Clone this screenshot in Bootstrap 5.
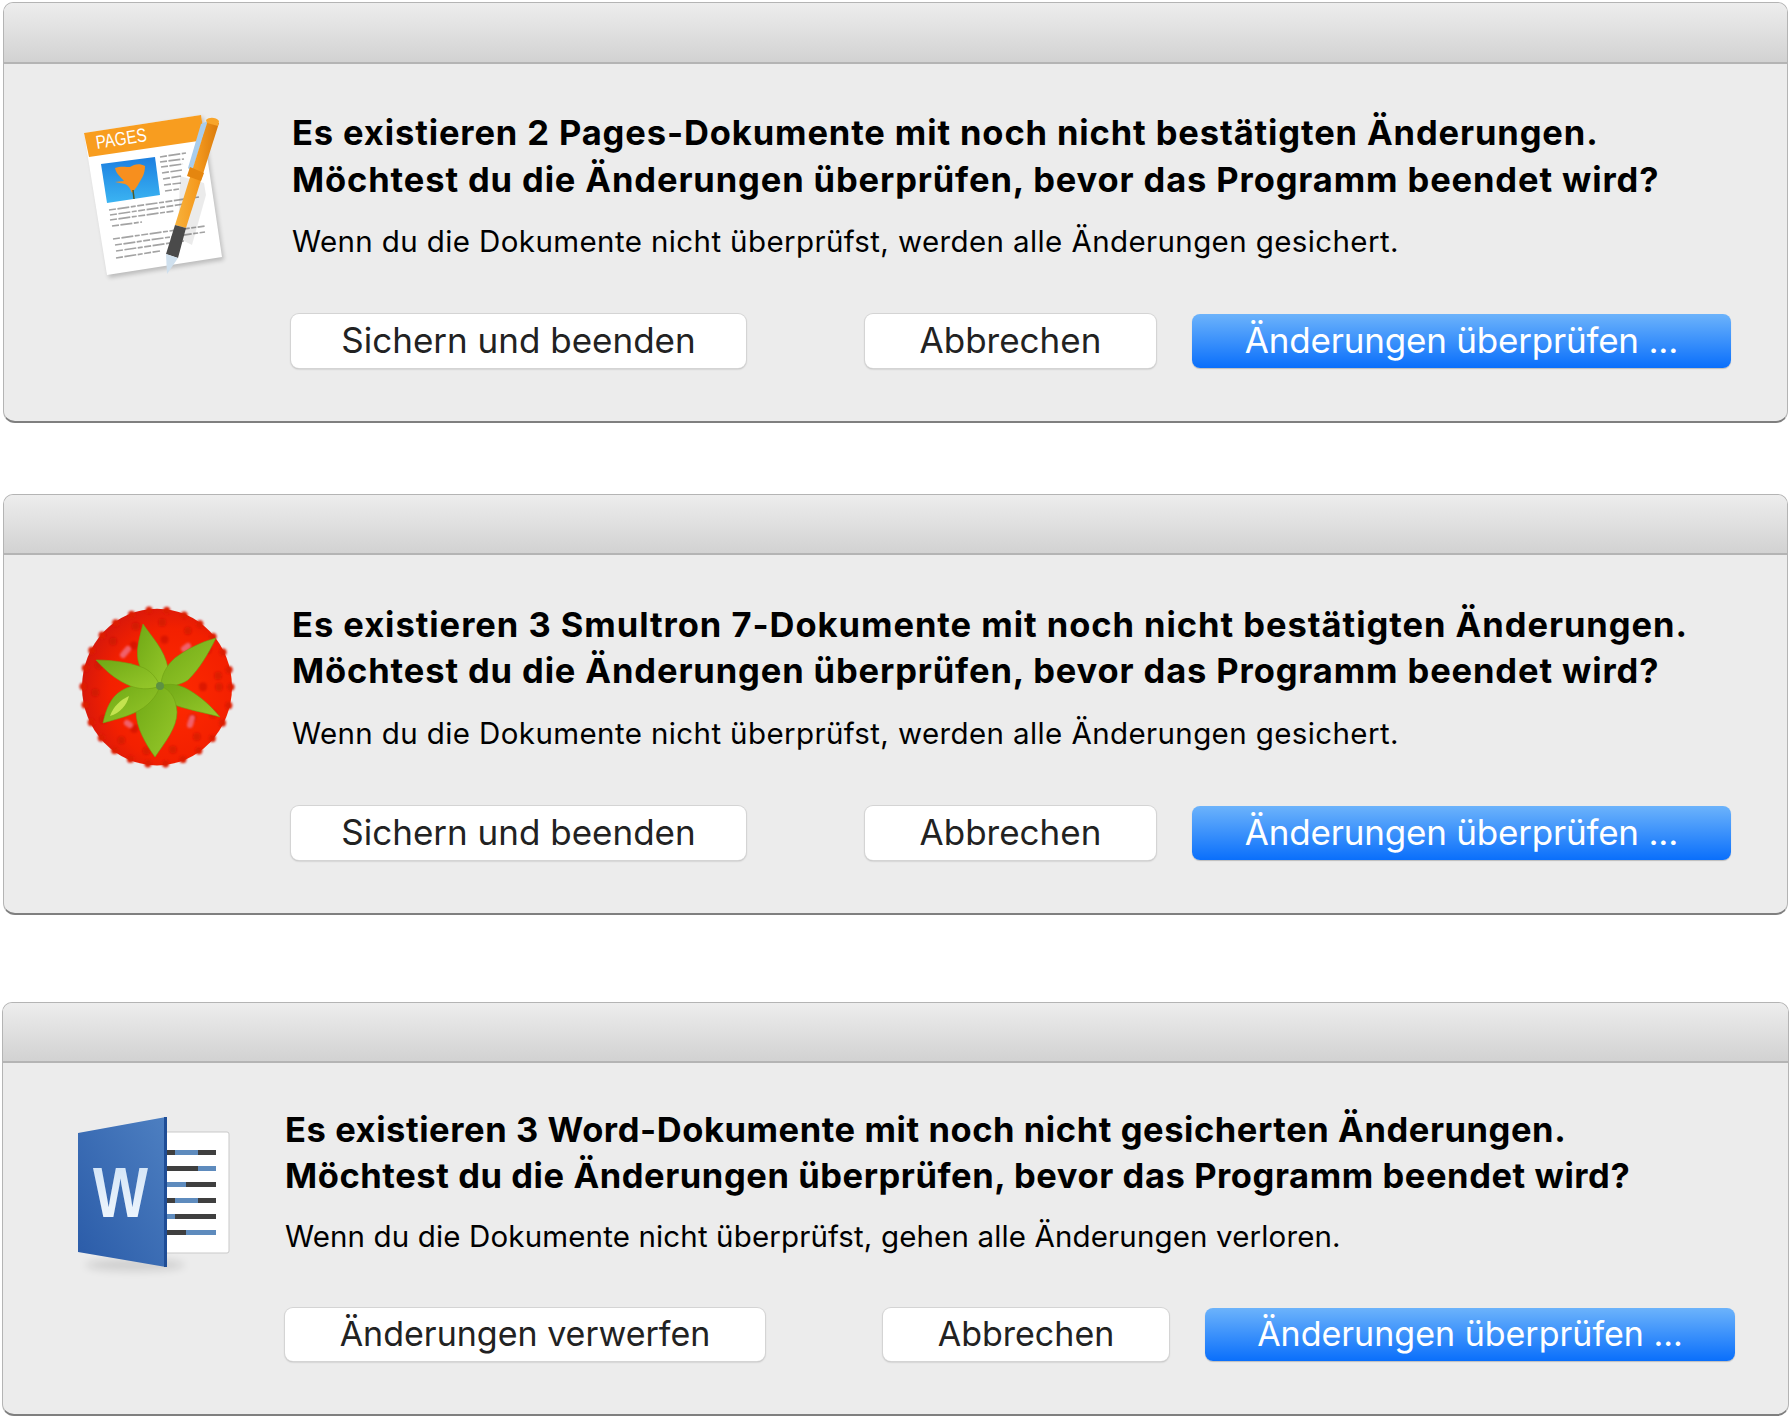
<!DOCTYPE html>
<html lang="de">
<head>
    <meta charset="UTF-8">
    <title>Änderungen überprüfen</title>
    <link href="https://cdn.jsdelivr.net/npm/bootstrap@5.3.0/dist/css/bootstrap.min.css" rel="stylesheet">
    <style>
        body { background: #fff; font-family: Inter, "Liberation Sans", sans-serif; color: #000; }
        .mac-stack { width: 1791px; height: 1418px; overflow: hidden; padding: 2px 3px 0; }
        .mac-win { background: #ececec; border: 1px solid #b4b4b4; border-bottom: 2px solid #7f7f7f; border-radius: 10px 10px 12px 12px; overflow: hidden; }
        .win-a { height: 421px; margin-bottom: 71px; }
        .win-b { height: 421px; margin-bottom: 87px; }
        .win-c { height: 414px; margin-left: -1px; margin-right: -1px; }
        .mac-title { height: 60px; background: linear-gradient(#ededed, #d2d2d2); border-bottom: 2px solid #b4b4b4; }
        .win-a .mac-title { height: 61px; }
        .mac-icon { width: 288px; flex: none; }
        .mac-icon svg { display: block; }
        .mac-main { padding-top: 47px; }
        .win-a .mac-main { padding-top: 46px; }
        .win-b .mac-main { padding-top: 46.5px; }
        .win-c .mac-main { padding-top: 43.5px; }
        .win-c .mac-icon { width: 282px; }
        .mac-head { font-size: 34.5px; line-height: 46.5px; font-weight: 700; letter-spacing: .88px; margin: 0; white-space: nowrap; }
        .win-c .mac-head { letter-spacing: .57px; }
        .head-wide { letter-spacing: .96px; }
        .mac-sub { font-size: 29.5px; line-height: 40px; letter-spacing: .39px; margin: 18px 0 0; white-space: nowrap; }
        .win-c .mac-sub { letter-spacing: .14px; margin-top: 16.5px; }
        .mac-btns { margin-top: 53px; margin-left: -1px; }
        .win-c .mac-btns { margin-top: 51.5px; margin-left: 0; }
        .mac-btn { height: 54px; font-size: 35px; line-height: 50px; padding: 0 0 2px; border: 0; border-radius: 8px; background: #fff; color: #222; box-shadow: 0 0 0 1px #d4d4d4, 0 1px 2px rgba(0,0,0,.3); white-space: nowrap; }
        .win-c .mac-btn { font-size: 34px; height: 53px; padding-bottom: 0; }
        .mac-btn:hover, .mac-btn:active { background: #fff; color: #222; }
        .mac-blue, .mac-blue:hover, .mac-blue:active { background: linear-gradient(#6cb3fb, #0a6ffb); color: #fff; box-shadow: 0 1px 1px rgba(0,0,0,.2); letter-spacing: -.2px; }
        .win-c .mac-blue { letter-spacing: 0; }
        .w-save { width: 455px; margin-right: 119px; }
        .w-cancel { width: 291px; margin-right: 36px; }
        .w-check { width: 539px; }
        .w-discard { width: 480px; margin-right: 118px; }
        .w-cancel-c { width: 286px; margin-right: 36px; }
        .w-check-c { width: 530px; }
    </style>
</head>
<body>
<div class="mac-stack">

    <!-- Pages -->
    <div class="mac-win win-a">
        <div class="mac-title"></div>
        <div class="d-flex">
            <div class="mac-icon">
                <svg width="288" height="240" viewBox="4 64 288 240">
                    <defs>
                        <linearGradient id="penG" x1="0" y1="0" x2="1" y2="0">
                            <stop offset="0" stop-color="#f7b23c"/><stop offset=".5" stop-color="#f59a1e"/><stop offset="1" stop-color="#d97a0c"/>
                        </linearGradient>
                        <linearGradient id="photoG" x1="0" y1="0" x2="0" y2="1">
                            <stop offset="0" stop-color="#1c7fe0"/><stop offset="1" stop-color="#3bb4f2"/>
                        </linearGradient>
                        <filter id="soft" x="-5%" y="-5%" width="110%" height="110%"><feGaussianBlur stdDeviation=".4"/></filter>
                        <filter id="softer" x="-10%" y="-10%" width="120%" height="120%"><feGaussianBlur stdDeviation="2"/></filter>
                    </defs>
                    <polygon points="87,136 203,117 224,260 109,278" fill="#000" opacity=".2" filter="url(#softer)"/>
                    <polygon points="84,133 201,115 222,257 107,275" fill="#fff"/>
                    <polygon points="84,133 201,115 205,140 89,157" fill="#f89d1f"/>
                    <text x="0" y="0" transform="translate(97,149) rotate(-9)" font-family="Liberation Sans" font-size="19" fill="#fff" textLength="51" lengthAdjust="spacingAndGlyphs">PAGES</text>
                    <polygon points="101,164 155,157 160,195 107,203" fill="url(#photoG)"/>
                    <path d="M132 193c-2-5-3-7-7-9l-10-2 9-1c-3-4-8-7-9-13 5-2 11-1 15-1 4-3 10-4 15-1 0 8-3 12-6 17-2 4-4 6-7 10z" fill="#f78f1e"/>
                    <path d="M133 190l1 9" stroke="#4a5a2a" stroke-width="1.5"/>
                    <g stroke="#8d8d8d" stroke-width="1.7" stroke-dasharray="7 1.5 12 1.5 5 1.5" opacity=".8" filter="url(#soft)">
                        <path d="M160 157l26-4M160 162l24-3M161 167l22-3M162 173l20-3M163 179l18-3M164 185l17-2M165 191l14-2"/>
                        <path d="M109 210l90-13M110 215l74-11M110 220l64-9M112 226l30-4"/>
                        <path d="M113 239l92-13M115 245l90-13M116 251l68-10M116 258l44-7"/>
                    </g>
                    <polygon points="180,176 204,183 206,195 192,245 178,238" fill="#000" opacity=".08"/>
                    <polygon points="201,124 208,121 192,172 188,168" fill="#a9cdec"/>
                    <polygon points="208,120 219,123 186,228 175,225" fill="url(#penG)"/>
                    <path d="M206 120c3-3 10-3 13 1l-1 5-11-3z" fill="#f8a52a"/>
                    <polygon points="190,167 204,173 201,181 187,176" fill="#e5860f"/>
                    <polygon points="175,225 186,228 178,258 166,254" fill="#4a4a4a"/>
                    <polygon points="166,254 178,258 167,274" fill="#cfe0ee"/>
                </svg>
            </div>
            <div class="mac-main">
                <h1 class="mac-head">Es existieren 2 Pages-Dokumente mit noch nicht bestätigten Änderungen.<br>Möchtest du die Änderungen überprüfen, bevor das Programm beendet wird?</h1>
                <p class="mac-sub">Wenn du die Dokumente nicht überprüfst, werden alle Änderungen gesichert.</p>
                <div class="d-flex mac-btns">
                    <button class="btn mac-btn w-save">Sichern und beenden</button>
                    <button class="btn mac-btn w-cancel">Abbrechen</button>
                    <button class="btn mac-btn mac-blue w-check">Änderungen überprüfen ...</button>
                </div>
            </div>
        </div>
    </div>

    <!-- Smultron -->
    <div class="mac-win win-b">
        <div class="mac-title"></div>
        <div class="d-flex">
            <div class="mac-icon">
                <svg width="288" height="240" viewBox="4 555 288 240">
                    <defs>
                        <radialGradient id="berryG" cx=".6" cy=".55" r=".6">
                            <stop offset="0" stop-color="#ff2a00"/><stop offset=".7" stop-color="#f32000"/><stop offset="1" stop-color="#d8180a"/>
                        </radialGradient>
                        <linearGradient id="leafG" x1="0" y1="0" x2="1" y2="1">
                            <stop offset="0" stop-color="#6fa815"/><stop offset="1" stop-color="#97c92b"/>
                        </linearGradient>
                        <filter id="soft2"><feGaussianBlur stdDeviation="1.2"/></filter>
                    </defs>
                    <g transform="translate(157 687) scale(1 1.045)">
                        <circle r="75" fill="url(#berryG)"/>
                        <circle r="74" fill="none" stroke="#dd1c06" stroke-width="7" stroke-linecap="round" stroke-dasharray="0 17.9" filter="url(#soft2)"/>
                        <g filter="url(#soft2)">
                            <circle r="62" fill="none" stroke="#b81206" stroke-width="8" stroke-linecap="round" stroke-dasharray="0 27" opacity=".4"/>
                            <circle r="46" fill="none" stroke="#a80f04" stroke-width="8" stroke-linecap="round" stroke-dasharray="0 32" opacity=".35"/>
                        </g>
                    </g>
                    <path d="M128 649l-5 6M188 646l-4 3M130 725l-3-2M192 718l-2 7" stroke="#f0606a" stroke-width="6" stroke-linecap="round" filter="url(#soft2)"/>
                    <g fill="url(#leafG)" stroke="#6e9f12" stroke-width=".6">
                        <path d="M143 624c8 12 22 26 25 44 2 8-3 15-8 18-10-4-19-12-22-26-2-12 2-24 5-36z"/>
                        <path d="M216 638c-8 16-16 30-28 42-8 5-19 8-27 6 0-10 5-20 14-28 12-9 26-16 41-20z"/>
                        <path d="M220 717c-14-4-36-8-48-13-8-4-11-11-13-18 10-3 20-2 30 4 12 7 22 16 31 27z"/>
                        <path d="M155 757c-10-14-19-30-19-46 0-12 12-24 24-25 12 4 16 14 17 26 0 16-12 30-22 45z"/>
                        <path d="M103 723c3-14 8-26 18-32 13-8 26-7 39-5-3 10-12 21-26 27-11 5-21 7-31 10z"/>
                        <path d="M96 660c18 0 36 3 48 8 8 4 13 11 16 18-10 4-22 4-34-2-12-6-20-13-30-24z"/>
                    </g>
                    <path d="M110 716c3-9 10-16 19-20-2 9-9 17-19 20z" fill="#c3e34f"/>
                    <circle cx="160" cy="686" r="4" fill="#5d9142"/>
                </svg>
            </div>
            <div class="mac-main">
                <h1 class="mac-head"><span class="head-wide">Es existieren 3 Smultron 7-Dokumente mit noch nicht bestätigten Änderungen.</span><br>Möchtest du die Änderungen überprüfen, bevor das Programm beendet wird?</h1>
                <p class="mac-sub">Wenn du die Dokumente nicht überprüfst, werden alle Änderungen gesichert.</p>
                <div class="d-flex mac-btns">
                    <button class="btn mac-btn w-save">Sichern und beenden</button>
                    <button class="btn mac-btn w-cancel">Abbrechen</button>
                    <button class="btn mac-btn mac-blue w-check">Änderungen überprüfen ...</button>
                </div>
            </div>
        </div>
    </div>

    <!-- Word -->
    <div class="mac-win win-c">
        <div class="mac-title"></div>
        <div class="d-flex">
            <div class="mac-icon">
                <svg width="282" height="240" viewBox="3 1062 282 240">
                    <defs>
                        <linearGradient id="wordG" x1="0" y1="1" x2="1" y2="0">
                            <stop offset="0" stop-color="#2a5ba8"/><stop offset="1" stop-color="#4d7fc1"/>
                        </linearGradient>
                        <linearGradient id="wG" x1="0" y1="0" x2="0" y2="1">
                            <stop offset="0" stop-color="#cfe2f6"/><stop offset="1" stop-color="#f4f9fe"/>
                        </linearGradient>
                        <filter id="softer3" x="-20%" y="-100%" width="140%" height="300%"><feGaussianBlur stdDeviation="4"/></filter>
                    </defs>
                    <ellipse cx="135" cy="1264" rx="50" ry="6" fill="#000" opacity=".12" filter="url(#softer3)"/>
                    <rect x="160" y="1131" width="69" height="121" rx="2" fill="#fff" stroke="#c9c9c9"/>
                    <g>
                        <rect x="166" y="1149" width="50" height="5" fill="#3f3f3f"/><rect x="175" y="1149" width="23" height="5" fill="#5e8bbd"/>
                        <rect x="166" y="1165" width="50" height="5" fill="#3f3f3f"/><rect x="198" y="1165" width="18" height="5" fill="#5e8bbd"/>
                        <rect x="166" y="1181" width="50" height="5" fill="#3f3f3f"/><rect x="166" y="1181" width="20" height="5" fill="#5e8bbd"/>
                        <rect x="166" y="1197" width="50" height="5" fill="#3f3f3f"/><rect x="175" y="1197" width="23" height="5" fill="#5e8bbd"/>
                        <rect x="166" y="1213" width="50" height="5" fill="#3f3f3f"/><rect x="166" y="1213" width="9" height="5" fill="#5e8bbd"/>
                        <rect x="166" y="1229" width="50" height="5" fill="#3f3f3f"/><rect x="186" y="1229" width="30" height="5" fill="#5e8bbd"/>
                    </g>
                    <polygon points="78,1132 166,1116 166,1266 78,1251" fill="url(#wordG)"/>
                    <polygon points="164,1116 167,1116 167,1266 164,1266" fill="#1f4d96"/>
                    <text x="93" y="1216" font-family="Liberation Sans" font-weight="700" font-size="70" fill="url(#wG)" textLength="55" lengthAdjust="spacingAndGlyphs">W</text>
                </svg>
            </div>
            <div class="mac-main">
                <h1 class="mac-head">Es existieren 3 Word-Dokumente mit noch nicht gesicherten Änderungen.<br>Möchtest du die Änderungen überprüfen, bevor das Programm beendet wird?</h1>
                <p class="mac-sub">Wenn du die Dokumente nicht überprüfst, gehen alle Änderungen verloren.</p>
                <div class="d-flex mac-btns">
                    <button class="btn mac-btn w-discard">Änderungen verwerfen</button>
                    <button class="btn mac-btn w-cancel-c">Abbrechen</button>
                    <button class="btn mac-btn mac-blue w-check-c">Änderungen überprüfen ...</button>
                </div>
            </div>
        </div>
    </div>

</div>
<script src="https://cdn.jsdelivr.net/npm/bootstrap@5.3.0/dist/js/bootstrap.bundle.min.js"></script>
</body>
</html>
